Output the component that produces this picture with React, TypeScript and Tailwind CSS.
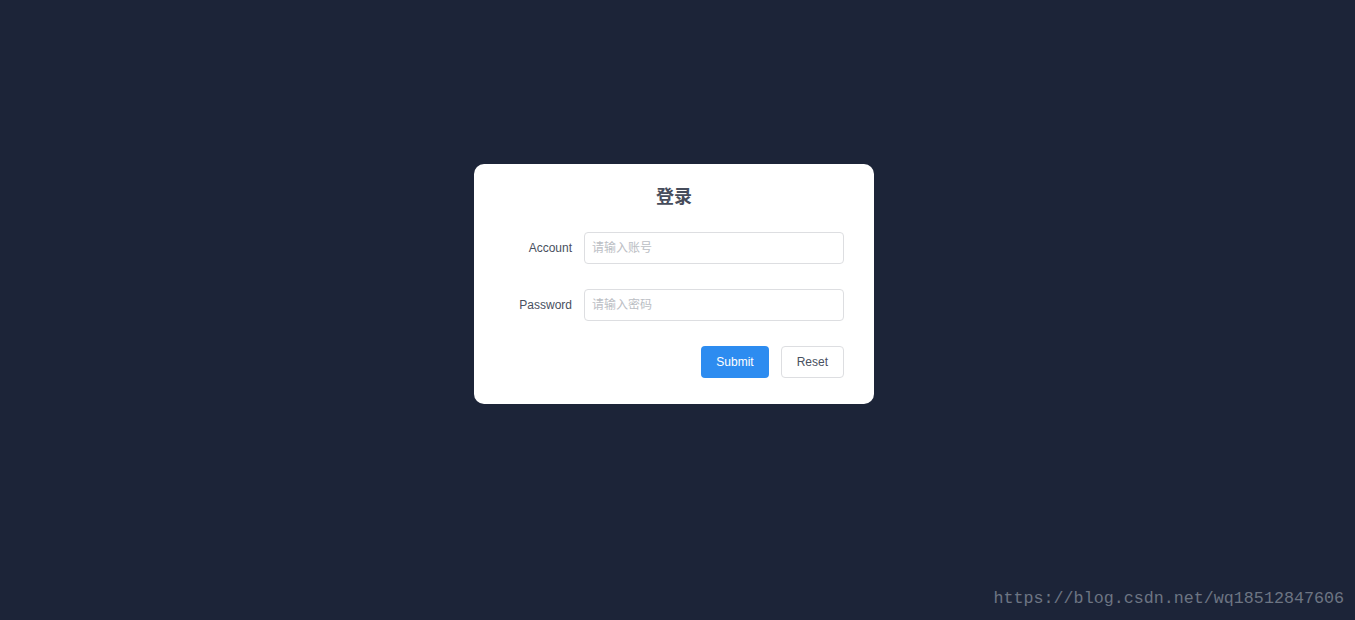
import { useState } from "react"

const sans = "font-['Liberation_Sans','Noto_Sans_CJK_SC',sans-serif]"

function Field({ label, placeholder, type = "text" }: { label: string; placeholder: string; type?: string }) {
  const [value, setValue] = useState("")
  return (
    <div className="flex items-center">
      <label className="w-[80px] shrink-0 pr-3 text-right text-xs text-[#495060]">{label}</label>
      <input
        type={type}
        value={value}
        onChange={(e) => setValue(e.target.value)}
        placeholder={placeholder}
        className="h-8 w-[260px] rounded border border-[#dddee1] bg-white px-[7px] text-xs text-[#495060] outline-none placeholder:text-[#bbbec4] focus:border-[#57a3f3]"
      />
    </div>
  )
}

export default function App() {
  return (
    <div className={`relative h-[620px] w-full bg-[#1c2438] pt-[164px] pl-[474px] ${sans}`}>
      {/* Login card */}
      <div className="flex w-[400px] flex-col rounded-[10px] bg-white px-[30px] pt-[20px] pb-[26px]">
        <h1 className="mb-[22px] text-center text-lg leading-[26px] font-bold text-[#464c5b]">登录</h1>
        <div className="flex flex-col gap-[25px]">
          <Field label="Account" placeholder="请输入账号" />
          <Field label="Password" placeholder="请输入密码" type="password" />
          <div className="flex justify-end gap-3">
            <button className="h-8 rounded bg-[#2d8cf0] px-[15px] text-xs text-white">Submit</button>
            <button className="h-8 rounded border border-[#dddee1] bg-white px-[15px] text-xs text-[#495060]">Reset</button>
          </div>
        </div>
      </div>

      {/* Watermark */}
      <span className="absolute right-[11px] bottom-[9px] font-['Liberation_Mono',monospace] text-[16.7px] text-[#6d7583]">
        https://blog.csdn.net/wq18512847606
      </span>
    </div>
  )
}
